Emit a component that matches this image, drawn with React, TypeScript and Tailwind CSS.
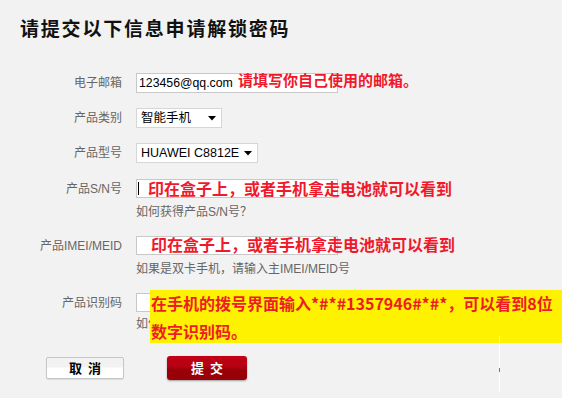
import React from "react";

const font = { fontFamily: '"Liberation Sans", "Noto Sans CJK SC", sans-serif' };

function Label({ children }: { children: React.ReactNode }) {
  return (
    <div className="w-[122px] shrink-0 text-right text-[12px] leading-[20px] text-[#666]">{children}</div>
  );
}

function Select({ value, width }: { value: string; width: string }) {
  return (
    <div className={`${width} h-[20px] bg-white border border-[#d6d6d6] flex items-center justify-between pl-[4px] pr-[5px] text-[12.5px] text-black`}>
      <span className="leading-[18px] whitespace-nowrap">{value}</span>
      <svg width="8" height="5" viewBox="0 0 8 5" className="shrink-0"><path d="M0 0H8L4 4.5Z" fill="#000" /></svg>
    </div>
  );
}

export default function App() {
  return (
    <div className="w-[562px] h-[398px] bg-[#f2f2f2] relative overflow-hidden" style={font}>
      <div className="pt-[17px] pl-[20px] text-[19px] leading-[22px] font-bold tracking-[1.8px] text-[#111]" style={{ fontFamily: '"Noto Sans CJK SC", sans-serif' }}>
        请提交以下信息申请解锁密码
      </div>

      {/* email */}
      <div className="mt-[34px] flex gap-[14px] relative">
        <Label>电子邮箱</Label>
        <div className="w-[202px] h-[20px] bg-white border border-[#c8c8c8] pl-[2px] text-[12.3px] leading-[18px] text-black">123456@qq.com</div>
        <div className="absolute left-[238px] top-[-4px] text-[15px] leading-[22px] font-bold text-[#f0192b] whitespace-nowrap" style={{ fontFamily: '"Noto Sans CJK SC", sans-serif' }}>
          请填写你自己使用的邮箱。
        </div>
      </div>

      {/* category */}
      <div className="mt-[15px] flex gap-[14px]">
        <Label>产品类别</Label>
        <Select value="智能手机" width="w-[86px]" />
      </div>

      {/* model */}
      <div className="mt-[15px] flex gap-[14px]">
        <Label>产品型号</Label>
        <Select value="HUAWEI C8812E" width="w-[122px]" />
      </div>

      {/* S/N */}
      <div className="mt-[16px] flex gap-[14px] relative">
        <Label>产品S/N号</Label>
        <div className="w-[202px] h-[19px] bg-white border border-[#c8c8c8] relative">
          <div className="absolute left-[1px] top-[2px] w-[1px] h-[13px] bg-black" />
        </div>
        <div className="absolute left-[148px] top-[-2px] text-[16px] leading-[22px] font-bold text-[#f0192b] whitespace-nowrap" style={{ fontFamily: '"Noto Sans CJK SC", sans-serif' }}>
          印在盒子上，或者手机拿走电池就可以看到
        </div>
      </div>
      <div className="mt-[6px] pl-[136px] text-[12px] leading-[14px] text-[#666]">如何获得产品S/N号？</div>

      {/* IMEI */}
      <div className="mt-[17px] flex gap-[14px] relative">
        <Label>产品IMEI/MEID</Label>
        <div className="w-[202px] h-[19px] bg-white border border-[#c8c8c8]" />
        <div className="absolute left-[151px] top-[-3px] text-[16px] leading-[22px] font-bold text-[#f0192b] whitespace-nowrap" style={{ fontFamily: '"Noto Sans CJK SC", sans-serif' }}>
          印在盒子上，或者手机拿走电池就可以看到
        </div>
      </div>
      <div className="mt-[6px] pl-[136px] text-[12px] leading-[14px] text-[#666]">如果是双卡手机，请输入主IMEI/MEID号</div>

      {/* identification */}
      <div className="mt-[17px] flex gap-[14px] relative">
        <Label>产品识别码</Label>
        <div className="w-[202px] h-[19px] bg-white border border-[#c8c8c8]" />
        <div className="absolute left-[150px] top-[-3px] w-[412px] h-[53px] bg-[#fff200] pl-[1px] text-[16px] leading-[28px] font-bold text-[#ee1c25]" style={{ fontFamily: '"Noto Sans CJK SC", sans-serif' }}>
          <div className="whitespace-nowrap -mt-[1px]">在手机的拨号界面输入*#*#1357946#*#*，可以看到8位</div>
          <div className="whitespace-nowrap">数字识别码。</div>
        </div>
      </div>
      <div className="mt-[4px] pl-[136px] text-[12px] leading-[14px] text-[#666]">如何获得产品识别码？</div>

      {/* buttons */}
      <div className="mt-[26px] flex items-start">
        <button className="ml-[46px] w-[78px] h-[22px] rounded-[2px] border border-[#c6c6c6] bg-[linear-gradient(#f2f2f2_0%,#f2f2f2_45%,#ffffff_50%,#ffffff_100%)] text-[13px] font-bold text-black leading-[20px] shadow-[0_1px_1px_rgba(0,0,0,0.1)]" style={{ fontFamily: '"Noto Sans CJK SC", sans-serif' }}>
          取&nbsp;&nbsp;消
        </button>
        <button className="ml-[43px] -mt-[1px] w-[80px] h-[24px] rounded-[3px] bg-[linear-gradient(#c20016_0%,#b50012_45%,#9a0008_55%,#980008_100%)] text-[13px] font-bold text-white leading-[24px] shadow-[0_1px_2px_rgba(0,0,0,0.35)]" style={{ fontFamily: '"Noto Sans CJK SC", sans-serif' }}>
          提&nbsp;&nbsp;交
        </button>
      </div>

      <div className="absolute left-[499px] top-[336px] w-[1px] h-[56px] bg-white" />
      <div className="absolute left-[499px] top-[368px] w-[1px] h-[4px] bg-[#777]" />
    </div>
  );
}
